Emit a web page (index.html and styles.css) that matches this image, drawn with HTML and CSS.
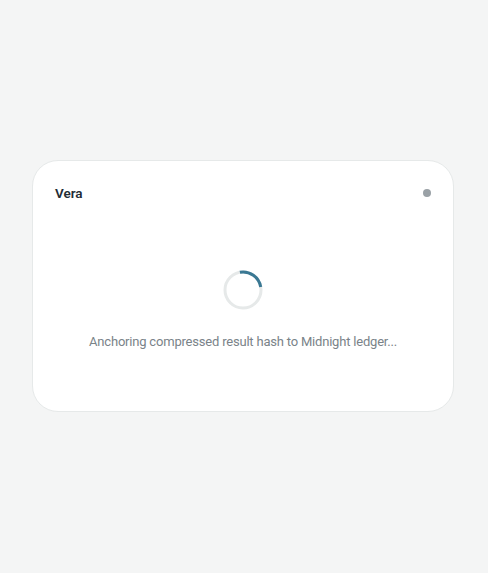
FILE: index.html
```html
<!DOCTYPE html>
<html lang="en">
<head>
<meta charset="utf-8">
<title>Vera</title>
<link rel="stylesheet" href="styles.css">
</head>
<body>
<div class="card">
  <div class="card-header">
    <span class="title">Vera</span>
    <span class="status-dot"></span>
  </div>
  <div class="card-body">
    <svg class="spinner" width="40" height="40" viewBox="0 0 40 40">
      <circle cx="20" cy="20" r="18" fill="none" stroke="#e6e9e9" stroke-width="3"/>
      <path d="M16.9 2.27 A18 18 0 0 1 37.73 16.9" fill="none" stroke="#3a7893" stroke-width="3"/>
    </svg>
    <p class="message">Anchoring compressed result hash to Midnight ledger...</p>
  </div>
</div>
</body>
</html>
```
FILE: styles.css
```css
html, body {
  margin: 0;
  padding: 0;
}
body {
  background: #f4f5f5;
  min-height: 100vh;
  display: flex;
  align-items: center;
  justify-content: center;
  padding: 0 34px 2px 32px;
  box-sizing: border-box;
  font-family: "Roboto", "Liberation Sans", sans-serif;
}
.card {
  width: 100%;
  background: #ffffff;
  border: 1px solid #e6e9e9;
  border-radius: 26px;
  padding: 23px 22px 23px 22px;
  box-sizing: border-box;
}
.card-header {
  display: flex;
  align-items: center;
  justify-content: space-between;
  height: 18px;
}
.title {
  font-size: 13.5px;
  font-weight: 600;
  color: #222c35;
}
.status-dot {
  width: 8px;
  height: 8px;
  border-radius: 50%;
  background: #9aa1a6;
}
.card-body {
  display: flex;
  flex-direction: column;
  align-items: center;
  padding: 68px 0 36px;
}
.spinner {
  display: block;
}
.message {
  margin: 22px 0 0;
  font-size: 13px;
  line-height: 20px;
  color: #7a8389;
  letter-spacing: -0.2px;
  white-space: nowrap;
}
```
